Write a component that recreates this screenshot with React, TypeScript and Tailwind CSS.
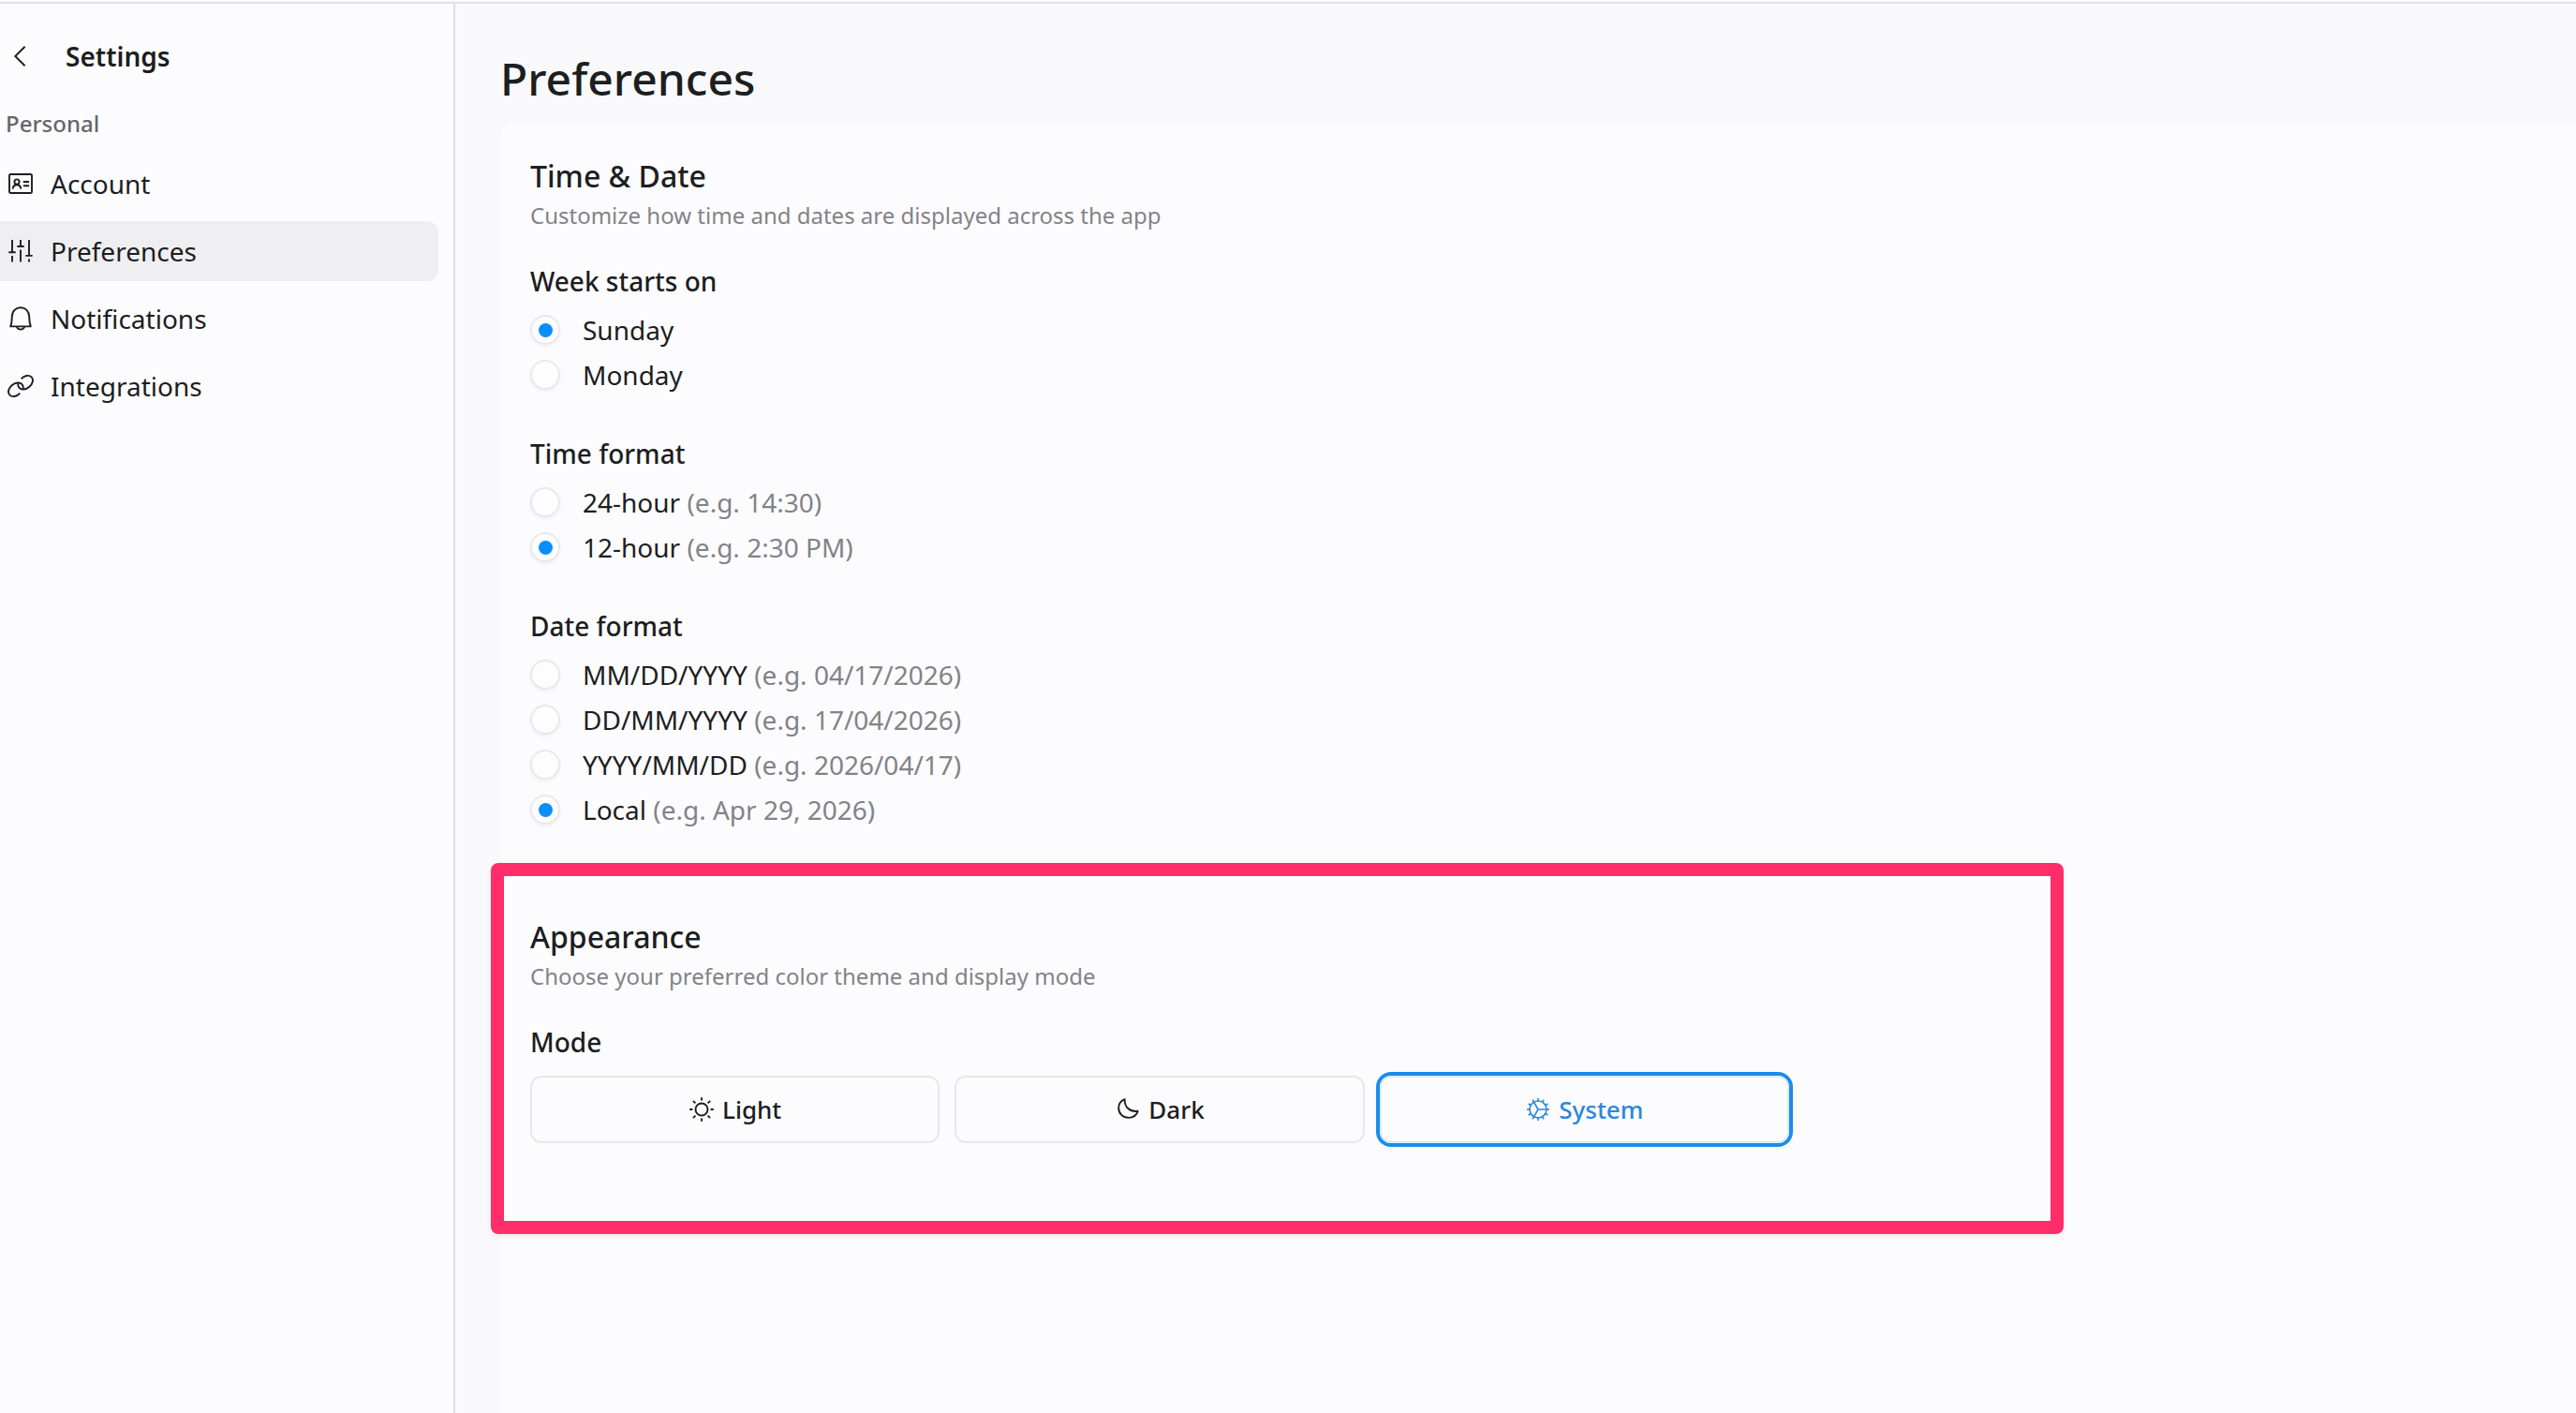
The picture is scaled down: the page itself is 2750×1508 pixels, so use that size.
import { useState, type ReactNode } from 'react';
import clsx from 'clsx';

type Option = { value: string; label: string; hint?: string };

type IconProps = { className?: string; children: ReactNode };

function Icon({ className, children }: IconProps) {
  return (
    <svg
      viewBox="0 0 28 28"
      fill="none"
      stroke="currentColor"
      strokeWidth={1.9}
      className={clsx('h-7 w-7 shrink-0', className)}
      aria-hidden="true"
    >
      {children}
    </svg>
  );
}

function ChevronLeftIcon() {
  return (
    <Icon>
      <path d="M18.6 3.8 8.3 14l10.3 10.2" />
    </Icon>
  );
}

function IdCardIcon() {
  return (
    <Icon>
      <rect x="2" y="4" width="24" height="20" rx="1.2" />
      <circle cx="10" cy="12" r="2.6" />
      <path d="M5.6 19.6c.3-2.8 1.9-4.4 4.4-4.4s4.1 1.6 4.4 4.4M16.8 12h6.2M16.8 16.2h6.2" />
    </Icon>
  );
}

function SlidersIcon() {
  return (
    <Icon>
      <path d="M5 2v13M1.3 15.2h7.4M5 19v6.5M14 2v7M10.3 9h7.4M14 12.6v12.9M23 2v16.8M19.3 18.9h7.4M23 22.4v3.1" />
    </Icon>
  );
}

function BellIcon() {
  return (
    <Icon>
      <path
        d="M3.2 22.4c1.2-3 1.5-5.6 1.6-10.4C4.9 6 8.9 2.3 14 2.3S23.1 6 23.2 12c.1 4.8.4 7.4 1.6 10.4Z"
        strokeLinejoin="round"
      />
      <path d="M9.8 22.6c.5 1.900 2.100 3 4.200 3s3.700-1.100 4.200-3" />
    </Icon>
  );
}

function LinkIcon() {
  return (
    <Icon>
      <path d="M13.3 21.6c-3.2 3.7-8.300 4.600-10.900 2-2.600-2.700-1.300-7.300 2.200-10.300 3.800-3.300 8.600-3.800 10.900-1.200 1.300 1.400 1.500 3.300.9 5.100" />
      <path d="M14.7 6.4c3.200-3.700 8.300-4.600 10.900-2 2.600 2.700 1.300 7.300-2.200 10.300-3.800 3.300-8.600 3.800-10.900 1.200-1.300-1.400-1.500-3.300-.9-5.100" />
    </Icon>
  );
}

function SunIcon() {
  return (
    <Icon>
      <circle cx="14" cy="14" r="6.5" />
      <path d="M14 1.200v3.200M14 23.600v3.200M1.200 14h3.200M23.600 14h3.200M4.900 4.900l2.500 2.500M20.600 20.600l2.500 2.500M4.900 23.100l2.500-2.500M20.600 7.400l2.500-2.500" />
    </Icon>
  );
}

function MoonIcon() {
  return (
    <Icon>
      <path
        d="M10.6 3.1c-4 1.6-6.4 5-6.4 9.300 0 6 4.500 10.500 10.500 10.500 4.600 0 8.700-2.500 10-7.100-8.600 1.200-14.400-4.300-14.100-12.700Z"
        strokeLinejoin="round"
      />
    </Icon>
  );
}

const TEETH = [0, 30, 60, 90, 120, 150, 180, 210, 240, 270, 300, 330];

function CogIcon() {
  return (
    <Icon>
      <g strokeWidth={1.6}>
        <circle cx="14" cy="14" r="9" />
        <path d="M14 14h9M14 14 9.5 6.2M14 14l-4.5 7.8" />
        {TEETH.map((deg) => (
          <path key={deg} d="M23 14h3" transform={`rotate(${deg} 14 14)`} />
        ))}
      </g>
    </Icon>
  );
}

const NAV_ITEMS = [
  { label: 'Account', icon: IdCardIcon },
  { label: 'Preferences', icon: SlidersIcon },
  { label: 'Notifications', icon: BellIcon },
  { label: 'Integrations', icon: LinkIcon },
];

const WEEK_START: Option[] = [
  { value: 'sunday', label: 'Sunday' },
  { value: 'monday', label: 'Monday' },
];

const TIME_FORMAT: Option[] = [
  { value: '24', label: '24-hour', hint: '(e.g. 14:30)' },
  { value: '12', label: '12-hour', hint: '(e.g. 2:30 PM)' },
];

const DATE_FORMAT: Option[] = [
  { value: 'mdy', label: 'MM/DD/YYYY', hint: '(e.g. 04/17/2026)' },
  { value: 'dmy', label: 'DD/MM/YYYY', hint: '(e.g. 17/04/2026)' },
  { value: 'ymd', label: 'YYYY/MM/DD', hint: '(e.g. 2026/04/17)' },
  { value: 'local', label: 'Local', hint: '(e.g. Apr 29, 2026)' },
];

const MODES = [
  { value: 'light', label: 'Light', icon: SunIcon },
  { value: 'dark', label: 'Dark', icon: MoonIcon },
  { value: 'system', label: 'System', icon: CogIcon },
];

function Sidebar() {
  return (
    <aside className="w-[486px] shrink-0 border-r-2 border-[#e1e1e5] bg-[#fcfcfe]">
      <div className="flex h-28 items-center gap-[34px] pl-2">
        <ChevronLeftIcon />
        <span className="text-[28px] leading-10 font-semibold">Settings</span>
      </div>
      <p className="pl-[6px] text-2xl leading-8 font-medium text-[#65676b]">Personal</p>
      <nav className="mt-4 flex flex-col gap-2 pr-4">
        {NAV_ITEMS.map(({ label, icon: ItemIcon }) => (
          <a
            key={label}
            className={clsx(
              'flex h-16 items-center gap-[18px] rounded-r-xl pl-2 text-[28px]',
              label === 'Preferences' && 'bg-[#efeff1]',
            )}
          >
            <ItemIcon />
            {label}
          </a>
        ))}
      </nav>
    </aside>
  );
}

function SectionHeader({ title, description }: { title: string; description: string }) {
  return (
    <header>
      <h2 className="text-[32px] leading-[48px] font-medium">{title}</h2>
      <p className="text-2xl leading-9 text-[#828387]">{description}</p>
    </header>
  );
}

type RadioFieldProps = { title: string; options: Option[]; initial: string };

function RadioField({ title, options, initial }: RadioFieldProps) {
  const [value, setValue] = useState(initial);

  return (
    <div role="radiogroup" aria-label={title}>
      <h3 className="mb-2 text-[28px] leading-10 font-medium">{title}</h3>
      {options.map((option) => (
        <button
          key={option.value}
          type="button"
          role="radio"
          aria-checked={option.value === value}
          onClick={() => setValue(option.value)}
          className="flex h-12 items-center gap-6 text-[28px]"
        >
          <span className="flex h-8 w-8 items-center justify-center rounded-full border-2 border-[#e9e9ec] bg-[#fdfdff] shadow-[0_2px_4px_rgba(0,0,0,0.05)]">
            {option.value === value && <span className="h-[15px] w-[15px] rounded-full bg-[#0a8dff]" />}
          </span>
          <span>
            {option.label}
            {option.hint && <span className="text-[#828387]"> {option.hint}</span>}
          </span>
        </button>
      ))}
    </div>
  );
}

function ModePicker() {
  const [mode, setMode] = useState('system');

  return (
    <div className="mt-8">
      <h3 className="mb-4 text-[28px] leading-10 font-medium">Mode</h3>
      <div className="grid w-[1344px] grid-cols-3 gap-4">
        {MODES.map(({ value, label, icon: ModeIcon }) => (
          <button
            key={value}
            type="button"
            onClick={() => setMode(value)}
            className={clsx(
              'flex h-[72px] items-center justify-center gap-2 rounded-xl border-2 text-[26px] font-medium',
              value === mode
                ? 'border-[#d9ebfb] text-[#2a87dd] ring-4 ring-[#1a8cec]'
                : 'border-[#e8e8eb]',
            )}
          >
            <ModeIcon />
            {label}
          </button>
        ))}
      </div>
    </div>
  );
}

export default function App() {
  return (
    <div className="h-[1508px] overflow-hidden bg-[#fcfcfe] pt-[2px] font-['Noto_Sans',sans-serif] text-[#1c1e21]">
      <div className="flex h-full border-t-2 border-[#e1e1e5]">
        <Sidebar />
        <main className="flex flex-1 flex-col bg-[#f9f9fb] pl-12">
          <h1 className="h-32 pt-12 text-5xl leading-[64px] font-medium">Preferences</h1>
          <div className="flex-1 rounded-tl-2xl bg-[#fcfcfe] px-8 pt-8">
            <section>
              <SectionHeader
                title="Time & Date"
                description="Customize how time and dates are displayed across the app"
              />
              <div className="mt-8 flex flex-col gap-10">
                <RadioField title="Week starts on" options={WEEK_START} initial="sunday" />
                <RadioField title="Time format" options={TIME_FORMAT} initial="12" />
                <RadioField title="Date format" options={DATE_FORMAT} initial="local" />
              </div>
            </section>
            <section className="relative mt-[88px]">
              {/* highlight frame around the appearance settings */}
              <div className="pointer-events-none absolute -top-[55px] -left-[42px] h-[396px] w-[1679px] rounded-[8px] border-[14px] border-[#ff2d69] shadow-[0_2px_6px_rgba(0,0,0,0.08)]" />
              <SectionHeader
                title="Appearance"
                description="Choose your preferred color theme and display mode"
              />
              <ModePicker />
            </section>
          </div>
        </main>
      </div>
    </div>
  );
}
